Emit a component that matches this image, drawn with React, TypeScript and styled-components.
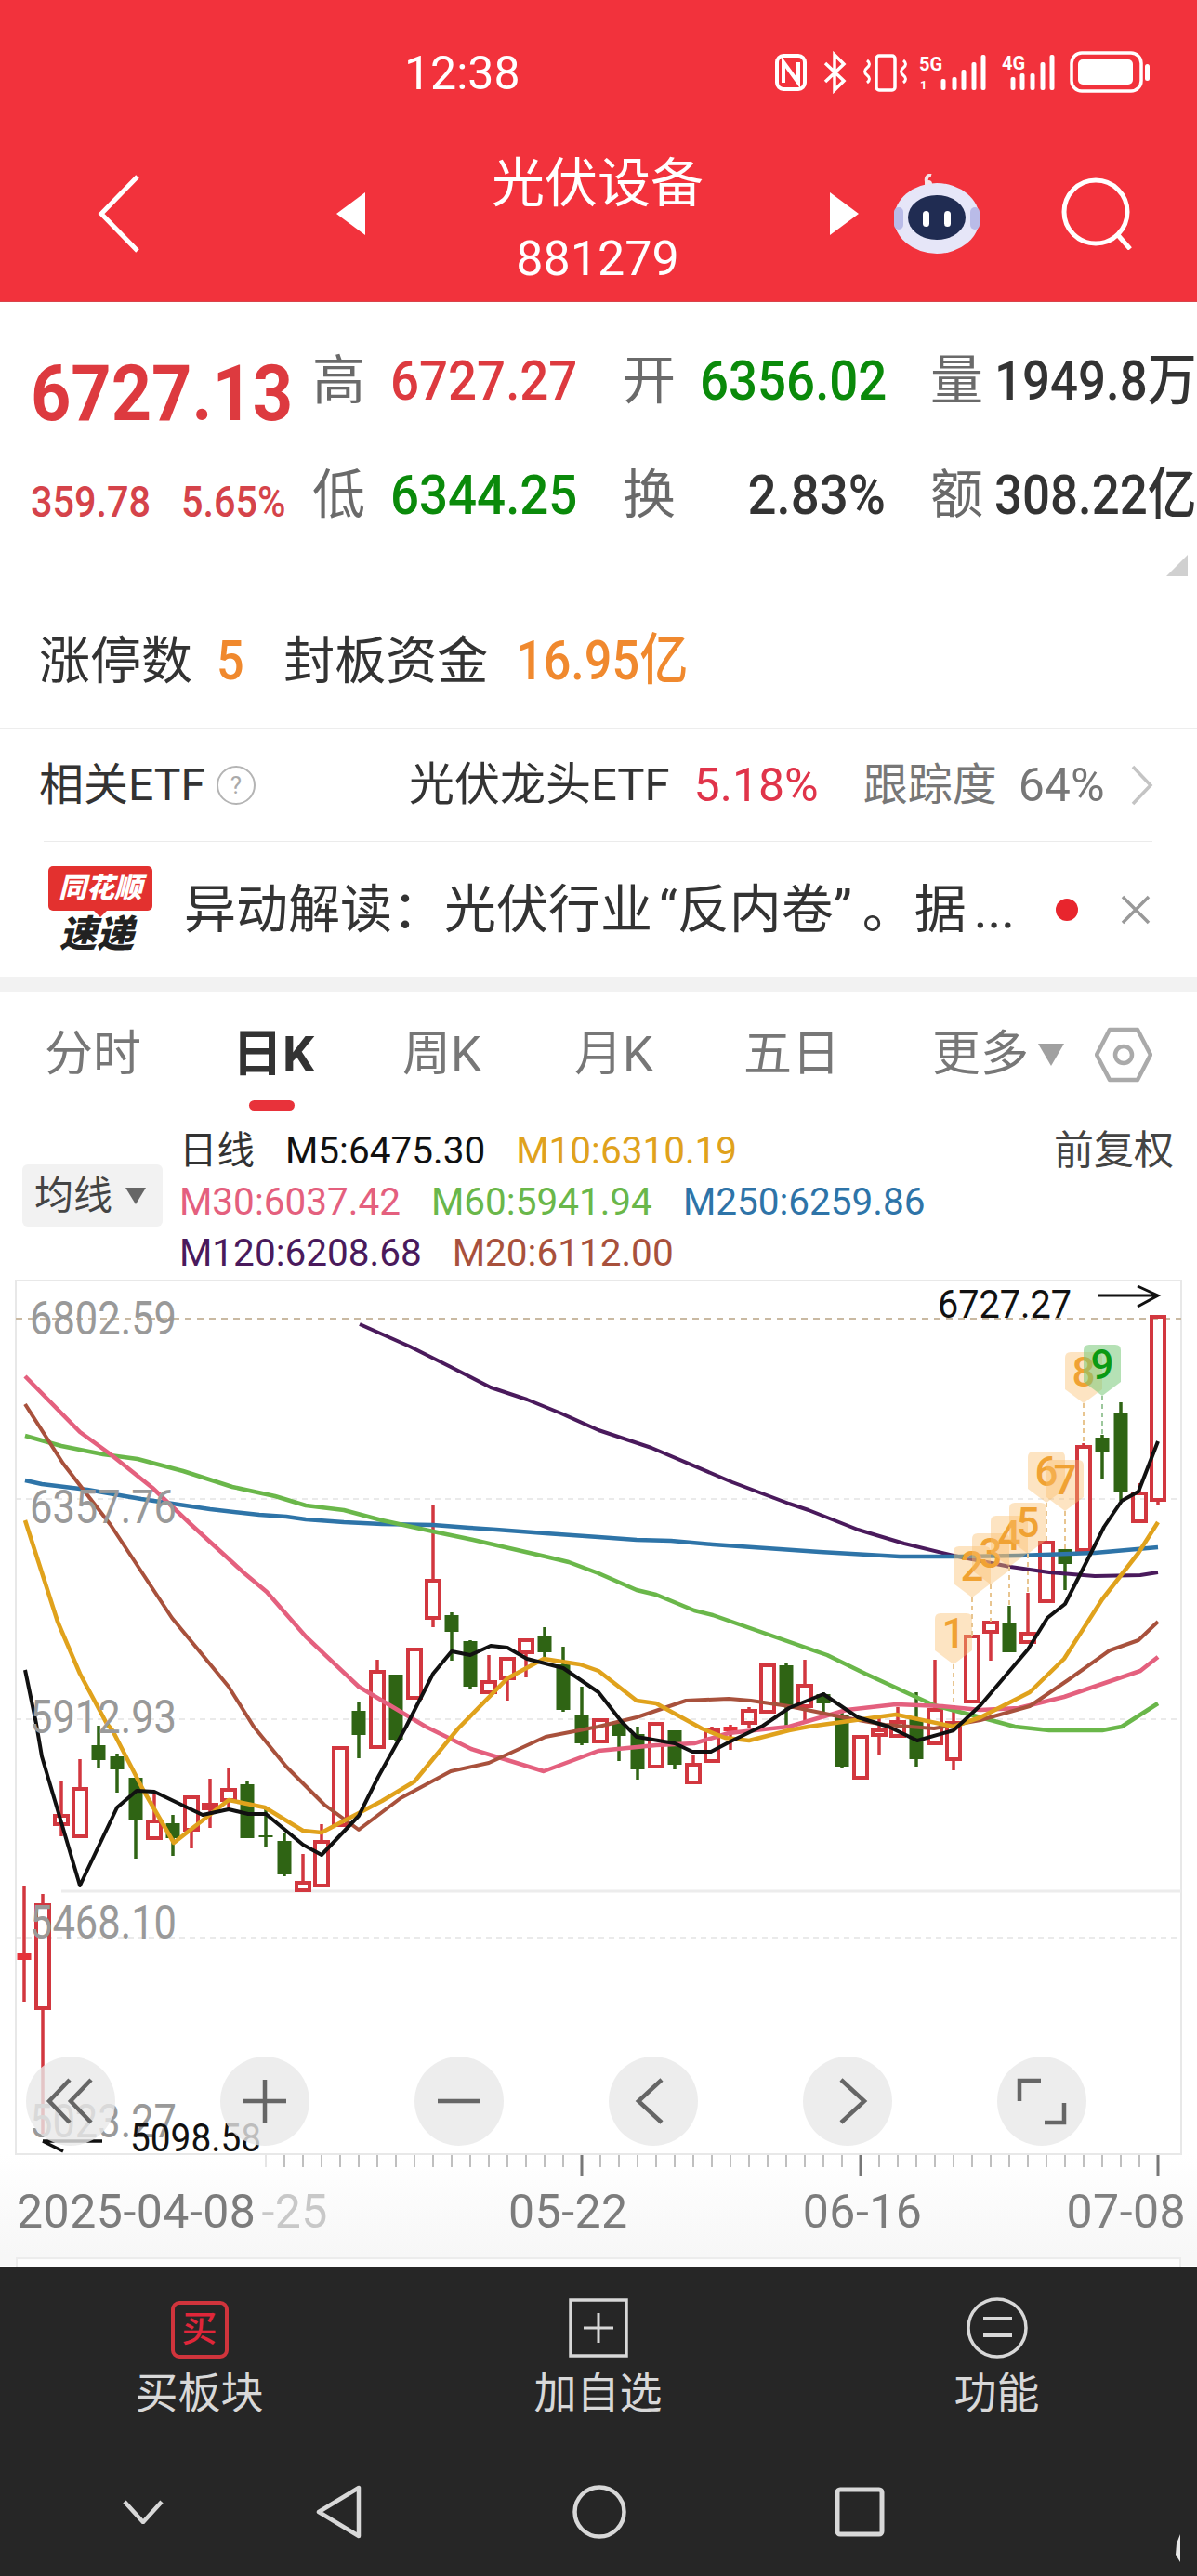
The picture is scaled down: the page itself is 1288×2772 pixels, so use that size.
import React from "react";
import styled, { createGlobalStyle } from "styled-components";

const FONT = `Roboto, "Noto Sans CJK SC", sans-serif`;

const GlobalStyle = createGlobalStyle`
  html, body {
    margin: 0;
    padding: 0;
    background: #fff;
  }
  body {
    font-family: ${FONT};
  }
`;

const Page = styled.div`
  position: relative;
  width: 1288px;
  height: 2772px;
  overflow: hidden;
  background: #fff;
`;

/* header */
const Header = styled.header`
  height: 325px;
  box-sizing: border-box;
  background: #f2323c;
  color: #fff;
  border-bottom: 1px solid #d9444b;
`;

const StatusBar = styled.div`
  display: flex;
  align-items: center;
  height: 50px;
  padding: 54px 0 0 435px;
`;

const Clock = styled.span`
  font-size: 50px;
  line-height: 50px;
  width: 399px;
`;

const NavRow = styled.div`
  display: flex;
  align-items: center;
  height: 170px;
  margin-top: 41px;
  padding-left: 105px;
`;

const TitleBlock = styled.div`
  width: 500px;
  display: flex;
  flex-direction: column;
  align-items: center;
  padding-top: 14px;
`;

const Title = styled.div`
  font-size: 57px;
  line-height: 66px;
`;

const Code = styled.div`
  font-size: 52px;
  line-height: 60px;
  margin-top: 18px;
`;

const NavIcon = styled.svg<{ $ml?: number }>`
  flex: none;
  display: block;
  margin-left: ${({ $ml }) => $ml ?? 0}px;
`;

/* quote */
const QuoteGrid = styled.div<{ $mt: number }>`
  display: grid;
  grid-template-columns: 303px 82px 252px 81px 250px 67px 218px;
  grid-template-rows: 56px;
  height: 56px;
  padding-left: 35px;
  margin-top: ${({ $mt }) => $mt}px;
  align-items: center;
`;

const BigPrice = styled.div`
  font-size: 84px;
  line-height: 56px;
  font-weight: 700;
  color: #dd3a3f;
  margin: 28px 0 0 -2px;
  transform: scaleX(0.9);
  transform-origin: left center;
`;

const SmallPrice = styled.div`
  display: flex;
  font-size: 46px;
  line-height: 56px;
  font-weight: 500;
  color: #d5434a;
  margin: 14px 0 0 -2px;
`;

const SmallFigure = styled.span`
  flex: none;
  width: 162px;
  transform: scaleX(0.9);
  transform-origin: left center;
`;

const QuoteLabel = styled.div`
  font-size: 57px;
  line-height: 56px;
  margin-left: -2px;
  color: #6a6a6a;
`;

const QuoteValue = styled.div<{ $color: string; $right?: boolean }>`
  font-size: 60px;
  line-height: 56px;
  font-weight: 500;
  color: ${({ $color }) => $color};
  width: 200px;
  text-align: ${({ $right }) => ($right ? "right" : "left")};
  white-space: nowrap;
  transform: scaleX(0.91);
  transform-origin: ${({ $right }) => ($right ? "right" : "left")} center;
`;

const QuoteSide = styled.div`
  font-size: 60px;
  line-height: 56px;
  font-weight: 500;
  color: #333;
  white-space: nowrap;
  transform: scaleX(0.88);
  transform-origin: left center;
`;

const CornerMark = styled.div`
  width: 0;
  height: 0;
  margin: 36px 0 0 1255px;
  border-left: 23px solid transparent;
  border-bottom: 23px solid #d0d0d0;
`;

const LimitRow = styled.div`
  display: flex;
  align-items: center;
  gap: 26px;
  height: 56px;
  margin-top: 63px;
  padding: 0 0 44px 42px;
  border-bottom: 1px solid #ededed;
`;

const LimitLabel = styled.span<{ $wide?: boolean }>`
  font-size: 55px;
  line-height: 56px;
  color: #333;
  margin-left: ${({ $wide }) => ($wide ? "12px" : "0")};
`;

const LimitValue = styled.span<{ $ml?: number }>`
  font-size: 60px;
  line-height: 56px;
  font-weight: 500;
  color: #f0892e;
  margin-left: ${({ $ml }) => $ml ?? 0}px;
  transform: scaleX(0.87);
  transform-origin: left center;
`;

/* etf + news */
const EtfRow = styled.div`
  display: flex;
  align-items: center;
  height: 121px;
  padding-left: 42px;
`;

const EtfText = styled.span<{ $ml?: number; $color?: string; $size?: number }>`
  font-size: ${({ $size }) => $size ?? 48}px;
  line-height: 60px;
  color: ${({ $color }) => $color ?? "#333"};
  margin-left: ${({ $ml }) => $ml ?? 0}px;
  white-space: nowrap;
`;

const HelpDot = styled.span`
  flex: none;
  display: flex;
  align-items: center;
  justify-content: center;
  width: 38px;
  height: 38px;
  margin-left: 12px;
  border: 2px solid #b4b4b4;
  border-radius: 50%;
  font-size: 26px;
  color: #aaa;
`;

const InsetRule = styled.div`
  height: 1px;
  margin: 0 48px 0 47px;
  background: #ebebeb;
`;

const NewsRow = styled.div`
  display: flex;
  align-items: center;
  height: 145px;
  padding-left: 51px;
`;

const Logo = styled.div`
  flex: none;
  width: 114px;
  display: flex;
  flex-direction: column;
  align-items: center;
`;

const LogoFlag = styled.div`
  position: relative;
  width: 112px;
  height: 48px;
  border-radius: 5px;
  background: #e3312f;
  color: #fff;
  font-size: 30px;
  line-height: 48px;
  font-weight: 900;
  font-style: italic;
  text-align: center;
  &::after {
    content: "";
    position: absolute;
    left: 48px;
    bottom: -7px;
    border-left: 8px solid transparent;
    border-right: 8px solid transparent;
    border-top: 8px solid #e3312f;
  }
`;

const LogoWord = styled.div`
  font-size: 40px;
  line-height: 40px;
  margin: 6px 8px 0 0;
  font-weight: 900;
  font-style: italic;
  color: #222;
`;

const NewsText = styled.div`
  width: 936px;
  flex: none;
  margin-left: 33px;
  font-size: 56px;
  line-height: 70px;
  color: #333;
  white-space: nowrap;
`;

const QuoteMark = styled.span<{ $before?: number; $after?: number }>`
  padding-left: ${({ $before }) => $before ?? 0}px;
  padding-right: ${({ $after }) => $after ?? 0}px;
`;

const NewsDot = styled.span`
  flex: none;
  width: 24px;
  height: 24px;
  margin-left: 2px;
  border-radius: 50%;
  background: #e8252d;
`;

const Band = styled.div`
  height: 16px;
  background: #f2f2f2;
`;

/* tabs */
const Tabs = styled.nav`
  display: grid;
  grid-template-columns: 204px 181px 185px 182px 203px 175px 62px;
  align-items: center;
  height: 129px;
  box-sizing: border-box;
  padding: 8px 0 0 48px;
  border-bottom: 1px solid #e8e8e8;
`;

const Tab = styled.div<{ $active?: boolean }>`
  position: relative;
  display: flex;
  align-items: center;
  font-size: ${({ $active }) => ($active ? 54 : 52)}px;
  line-height: 60px;
  color: ${({ $active }) => ($active ? "#333" : "#777")};
  font-weight: ${({ $active }) => ($active ? 700 : 400)};
  margin-left: ${({ $active }) => ($active ? "-2px" : "0")};
  &::after {
    content: "";
    display: ${({ $active }) => ($active ? "block" : "none")};
    position: absolute;
    left: 18px;
    top: 79px;
    width: 49px;
    height: 11px;
    border-radius: 6px;
    background: #e8323a;
  }
`;

const TabArrow = styled.span`
  margin-left: 10px;
  border-left: 14px solid transparent;
  border-right: 14px solid transparent;
  border-top: 24px solid #a0a0a0;
`;

/* legend */
const Legend = styled.div`
  display: flex;
  height: 182px;
  box-sizing: border-box;
  padding: 15px 25px 0 24px;
`;

const MaSelect = styled.div`
  flex: none;
  display: flex;
  align-items: center;
  box-sizing: border-box;
  width: 151px;
  height: 67px;
  margin: 42px 18px 0 0;
  padding-left: 13px;
  border-radius: 6px;
  background: #f2f2f2;
  font-size: 42px;
  line-height: 50px;
  color: #444;
`;

const SelectArrow = styled.span`
  margin-left: 14px;
  border-left: 11px solid transparent;
  border-right: 11px solid transparent;
  border-top: 18px solid #666;
`;

const LegendRows = styled.div`
  flex: 1;
  display: flex;
  flex-direction: column;
`;

const LegendRow = styled.div`
  display: flex;
  gap: 33px;
  height: 55px;
  align-items: center;
`;

const MaValue = styled.span<{ $color: string }>`
  font-size: 40.5px;
  line-height: 55px;
  color: ${({ $color }) => $color};
  white-space: nowrap;
`;

const AdjustMode = styled.span`
  margin-left: auto;
  font-size: 43px;
  line-height: 55px;
  color: #444;
`;

/* chart */
const ChartWrap = styled.section`
  position: relative;
  z-index: 1;
  height: 940px;
`;

const ChartSvg = styled.svg`
  display: block;
  overflow: visible;
`;

const AxisLabel = styled.text`
  font-family: ${FONT};
  font-size: 50px;
  fill: #999;
`;

const PriceTag = styled.text`
  font-family: ${FONT};
  font-size: 42px;
  fill: #111;
`;

const PinDigit = styled.text<{ $green?: boolean }>`
  font-family: ${FONT};
  font-size: 44px;
  font-weight: 500;
  text-anchor: middle;
  fill: ${({ $green }) => ($green ? "#0a9a14" : "#f0a233")};
`;

const Controls = styled.div`
  position: absolute;
  left: 28px;
  top: 835px;
  display: flex;
  gap: 113px;
`;

const RoundButton = styled.div`
  width: 96px;
  height: 96px;
  border-radius: 50%;
  display: flex;
  align-items: center;
  justify-content: center;
  background: rgba(232, 232, 232, 0.8);
`;

const ControlIcon = styled.svg`
  display: block;
  overflow: visible;
  fill: none;
  stroke: #666;
  stroke-width: 4.5;
  stroke-linejoin: miter;
`;

/* date axis */
const AxisStrip = styled.div`
  height: 120px;
  box-sizing: border-box;
  background: linear-gradient(to bottom, #ffffff 0%, #f7f7f7 90%);
`;

const TickSvg = styled.svg`
  display: block;
`;

const DateRow = styled.div`
  display: flex;
  height: 60px;
  margin-top: 6px;
  align-items: center;
`;

const DateLabel = styled.span<{ $ml: number; $color?: string }>`
  font-size: 50px;
  line-height: 60px;
  margin-left: ${({ $ml }) => $ml}px;
  color: ${({ $color }) => $color ?? "#7c7c7c"};
  letter-spacing: 0.5px;
  white-space: nowrap;
`;

const FrameTail = styled.div`
  position: absolute;
  left: 17px;
  top: 2429px;
  width: 1254px;
  height: 11px;
  border: 2px solid #ececec;
  border-bottom: 0;
  box-sizing: border-box;
  background: #fcfcfc;
`;

/* footer */
const Footer = styled.footer`
  position: absolute;
  z-index: 2;
  left: 0;
  top: 2440px;
  width: 1288px;
  height: 332px;
  background: #262626;
  color: #d8d8d8;
`;

const Toolbar = styled.div`
  display: grid;
  grid-template-columns: repeat(3, 429px);
  padding-top: 32px;
  height: 168px;
`;

const ToolItem = styled.div`
  display: flex;
  flex-direction: column;
  align-items: center;
`;

const ToolIconBox = styled.div`
  height: 66px;
  display: flex;
  align-items: center;
  justify-content: center;
`;

const BuyBadge = styled.div`
  width: 62px;
  height: 62px;
  box-sizing: border-box;
  margin-top: 3px;
  border: 4px solid #d0343c;
  border-radius: 9px;
  color: #e0263a;
  font-size: 38px;
  line-height: 52px;
  text-align: center;
  font-weight: 500;
`;

const ToolLabel = styled.div`
  margin-top: 7px;
  font-size: 46px;
  line-height: 60px;
`;

const SystemNav = styled.div`
  display: flex;
  align-items: center;
  height: 126px;
  padding-left: 132px;
`;

const CornerGlint = styled.svg`
  position: absolute;
  right: 18px;
  bottom: 15px;
`;

const StatusIcons = () => (
  <svg width="405" height="50" viewBox="834 55 405 50" fill="none" style={{ flex: "none" }}>
    <rect x="836" y="61" width="30" height="36" rx="7" stroke="#fff" strokeWidth="4" />
    <path d="M843 90 V68 L859 90 V68" stroke="#fff" strokeWidth="4" />
    <path d="M888 69 L908 88 L898 98 V60 L908 70 L888 89" stroke="#fff" strokeWidth="3.5" />
    <rect x="943" y="61" width="20" height="37" rx="3" stroke="#fff" strokeWidth="3.5" />
    <path d="M933 66 q5 4 0 8 q-5 4 0 8 q5 4 0 8" stroke="#fff" strokeWidth="3" />
    <path d="M972 66 q5 4 0 8 q-5 4 0 8 q5 4 0 8" stroke="#fff" strokeWidth="3" />
    <text x="989" y="77" fill="#fff" fontSize="20" fontWeight="700" fontFamily="Roboto, sans-serif">5G</text>
    <text x="990" y="97" fill="#fff" fontSize="13" fontWeight="700" fontFamily="Roboto, sans-serif">1</text>
    {[
      [1015, 86],
      [1027, 84],
      [1037, 76],
      [1048, 68],
      [1058, 60],
    ].map(([x, top]) => (
      <rect key={x} x={x - 2.5} y={top} width="5" height={98 - top} rx="2" fill="#fff" />
    ))}
    <text x="1078" y="76" fill="#fff" fontSize="20" fontWeight="700" fontFamily="Roboto, sans-serif">4G</text>
    {[
      [1090, 84],
      [1100, 80],
      [1111, 80],
      [1122, 68],
      [1132, 60],
    ].map(([x, top]) => (
      <rect key={x} x={x - 2.5} y={top} width="5" height={98 - top} rx="2" fill="#fff" />
    ))}
    <rect x="1153" y="58" width="75" height="41" rx="11" stroke="#fff" strokeWidth="3.5" />
    <rect x="1160" y="65" width="59" height="27" rx="5" fill="#fff" />
    <rect x="1232" y="70" width="5" height="18" rx="2.5" fill="#fff" />
  </svg>
);

const Robot = () => (
  <NavIcon width="92" height="86" viewBox="0 0 92 86" $ml={38}>
    <path d="M36 12 C33 5 36 1 40 2" fill="none" stroke="#f3e3e6" strokeWidth="4" />
    <circle cx="37" cy="11" r="4" fill="#f6e6ea" />
    <ellipse cx="46" cy="48" rx="46" ry="38" fill="#e6e6f8" />
    <rect x="0" y="36" width="10" height="24" rx="5" fill="#b9bbe8" />
    <rect x="82" y="36" width="10" height="24" rx="5" fill="#b9bbe8" />
    <ellipse cx="46" cy="47" rx="31" ry="24" fill="#202c52" />
    <rect x="31" y="40" width="7" height="17" rx="3.5" fill="#fff" />
    <rect x="54" y="40" width="7" height="17" rx="3.5" fill="#fff" />
  </NavIcon>
);

type Candle = [number, number, number, number, number, "r" | "g" | "f"];

// index, high, body top, body bottom, low, kind
const CANDLES: Candle[] = [
  [0, 2031, 2104, 2111, 2156, "f"],
  [1, 2040, 2052, 2163, 2300, "r"],
  [2, 1918, 1956, 1965, 1978, "r"],
  [3, 1895, 1927, 1978, 1980, "r"],
  [4, 1859, 1880, 1896, 1905, "g"],
  [5, 1889, 1892, 1906, 1931, "g"],
  [6, 1915, 1915, 1961, 2002, "g"],
  [7, 1933, 1962, 1980, 1980, "r"],
  [8, 1955, 1964, 1980, 1999, "g"],
  [9, 1936, 1936, 1971, 1991, "r"],
  [10, 1916, 1944, 1948, 1969, "r"],
  [11, 1904, 1928, 1939, 1948, "r"],
  [12, 1918, 1922, 1980, 1980, "g"],
  [13, 1946, 1977, 1979, 1989, "g"],
  [14, 1974, 1983, 2019, 2021, "g"],
  [15, 1997, 2028, 2036, 2036, "r"],
  [16, 1965, 1984, 2031, 2031, "r"],
  [17, 1883, 1883, 1966, 1966, "r"],
  [18, 1833, 1843, 1869, 1894, "g"],
  [19, 1788, 1801, 1882, 1884, "r"],
  [20, 1804, 1804, 1874, 1876, "g"],
  [21, 1777, 1777, 1829, 1829, "r"],
  [22, 1622, 1703, 1743, 1753, "r"],
  [23, 1737, 1740, 1758, 1789, "g"],
  [24, 1767, 1768, 1817, 1819, "g"],
  [25, 1783, 1812, 1823, 1823, "r"],
  [26, 1787, 1787, 1808, 1832, "r"],
  [27, 1767, 1767, 1780, 1807, "r"],
  [28, 1753, 1763, 1780, 1787, "g"],
  [29, 1774, 1793, 1842, 1844, "g"],
  [30, 1817, 1847, 1878, 1880, "g"],
  [31, 1853, 1853, 1876, 1876, "r"],
  [32, 1855, 1857, 1870, 1897, "g"],
  [33, 1860, 1868, 1906, 1917, "g"],
  [34, 1857, 1857, 1903, 1903, "r"],
  [35, 1864, 1864, 1901, 1906, "g"],
  [36, 1890, 1901, 1920, 1922, "r"],
  [37, 1860, 1864, 1897, 1897, "r"],
  [38, 1858, 1860, 1865, 1885, "f"],
  [39, 1839, 1843, 1856, 1862, "r"],
  [40, 1794, 1794, 1844, 1844, "r"],
  [41, 1791, 1794, 1838, 1860, "g"],
  [42, 1788, 1816, 1838, 1855, "r"],
  [43, 1823, 1825, 1835, 1847, "g"],
  [44, 1845, 1848, 1903, 1905, "g"],
  [45, 1870, 1871, 1915, 1915, "r"],
  [46, 1848, 1864, 1869, 1890, "r"],
  [47, 1839, 1855, 1870, 1870, "r"],
  [48, 1823, 1852, 1895, 1903, "g"],
  [49, 1788, 1842, 1878, 1878, "r"],
  [50, 1837, 1856, 1895, 1907, "r"],
  [51, 1763, 1763, 1833, 1833, "r"],
  [52, 1748, 1748, 1758, 1789, "r"],
  [53, 1730, 1749, 1780, 1780, "g"],
  [54, 1716, 1760, 1769, 1769, "r"],
  [55, 1662, 1662, 1725, 1725, "r"],
  [56, 1669, 1669, 1685, 1713, "g"],
  [57, 1555, 1559, 1670, 1673, "r"],
  [58, 1546, 1549, 1564, 1593, "g"],
  [59, 1511, 1523, 1608, 1617, "g"],
  [60, 1598, 1609, 1639, 1639, "r"],
  [61, 1419, 1419, 1616, 1622, "r"],
];

const RED = "#d2373f";
const GREEN = "#2f6414";
const candleX = (i: number) => 26 + 20 * i;

type MaLine = { color: string; width: number; points: string };

const MA_LINES: MaLine[] = [
  {
    color: "#4a1a5c",
    width: 4,
    points:
      "387,1427 441,1451 485,1473 528,1495 567,1508 604,1523 644,1541 701,1560 788,1597 849,1620 870,1627 923,1648 973,1663 1026,1676 1087,1688 1129,1694 1178,1698 1227,1697 1246,1694",
  },
  {
    color: "#2e74a8",
    width: 4.5,
    points:
      "27,1595 45,1599 94,1605 152,1615 226,1626 279,1632 308,1634 329,1637 370,1640 411,1642 466,1643 505,1646 534,1648 587,1652 644,1656 685,1659 722,1660 767,1664 882,1672 968,1677 1034,1677 1096,1676 1178,1673 1246,1667",
  },
  {
    color: "#6ab74a",
    width: 4.5,
    points:
      "27,1547 66,1558 111,1567 148,1572 197,1585 250,1602 296,1612 329,1622 370,1627 411,1638 466,1650 509,1659 587,1677 612,1683 644,1695 685,1713 706,1718 747,1735 767,1740 890,1783 931,1803 1005,1837 1055,1850 1092,1860 1129,1864 1186,1864 1207,1860 1246,1835",
  },
  {
    color: "#e4607e",
    width: 4.5,
    points:
      "27,1483 86,1543 119,1567 164,1603 205,1642 263,1695 287,1715 329,1763 386,1817 458,1860 507,1884 585,1908 644,1886 706,1880 747,1878 784,1867 849,1860 911,1842 964,1836 1014,1838 1055,1842 1096,1840 1145,1828 1227,1800 1246,1785",
  },
  {
    color: "#a8513c",
    width: 4,
    points:
      "27,1513 68,1577 119,1643 185,1743 246,1817 273,1860 308,1903 349,1944 386,1971 431,1937 485,1908 526,1899 587,1871 644,1860 685,1850 738,1832 784,1830 808,1832 849,1838 907,1850 952,1858 1005,1862 1055,1853 1108,1838 1149,1810 1194,1778 1225,1767 1246,1747",
  },
  {
    color: "#e0a21c",
    width: 4.5,
    points:
      "27,1638 62,1747 86,1803 115,1857 121,1864 154,1928 187,1985 246,1939 285,1947 326,1972 346,1974 411,1940 446,1919 493,1862 546,1808 585,1787 624,1793 644,1800 685,1832 706,1835 755,1862 780,1872 806,1875 849,1864 870,1860 964,1847 1026,1860 1055,1850 1108,1823 1145,1787 1186,1723 1225,1673 1246,1640",
  },
  {
    color: "#111",
    width: 4,
    points:
      "27,1799 39,1857 45,1892 86,2031 126,1947 147,1929 166,1930 218,1955 246,1949 267,1954 286,1954 326,1987 346,1998 386,1956 407,1914 427,1878 437,1860 466,1803 486,1779 506,1783 528,1773 546,1775 567,1787 606,1797 644,1823 669,1855 685,1871 726,1878 745,1887 765,1887 786,1876 821,1859 849,1840 886,1825 923,1850 956,1860 987,1875 1026,1864 1038,1853 1055,1837 1106,1777 1127,1743 1146,1728 1174,1673 1188,1645 1207,1617 1225,1607 1246,1553",
  },
];

type Pin = { n: string; cx: number; top: number; end: number; green?: boolean };

const PINS: Pin[] = [
  { n: "1", cx: 1026, top: 1738, end: 1837 },
  { n: "2", cx: 1046, top: 1666, end: 1762 },
  { n: "3", cx: 1066, top: 1652, end: 1747 },
  { n: "4", cx: 1086, top: 1633, end: 1730 },
  { n: "5", cx: 1106, top: 1619, end: 1716 },
  { n: "6", cx: 1126, top: 1564, end: 1662 },
  { n: "7", cx: 1146, top: 1573, end: 1669 },
  { n: "8", cx: 1166, top: 1457, end: 1555 },
  { n: "9", cx: 1186, top: 1449, end: 1546, green: true },
];

const pinPath = (cx: number, top: number) =>
  `M${cx - 14} ${top} H${cx + 14} Q${cx + 20} ${top} ${cx + 20} ${top + 6} V${top + 40} L${cx} ${top + 55} L${cx - 20} ${top + 40} V${top + 6} Q${cx - 20} ${top} ${cx - 14} ${top} Z`;

const AXIS_LABELS: [string, number][] = [
  ["6802.59", 1438],
  ["6357.76", 1641],
  ["5912.93", 1867],
  ["5468.10", 2088],
  ["5023.27", 2302],
];

const Chart = () => (
  <ChartSvg width="1288" height="940" viewBox="0 1380 1288 940">
    <rect x="17" y="1380" width="1254" height="940" fill="#fff" stroke="#e8e8e8" strokeWidth="2" />
    <line x1="17" x2="1271" y1="1421" y2="1421" stroke="#c9b9a2" strokeWidth="2" strokeDasharray="7 6" />
    {[1615, 1852, 2087].map((y) => (
      <line key={y} x1="17" x2="1271" y1={y} y2={y} stroke="#e4e4e4" strokeWidth="1.5" strokeDasharray="6 5" />
    ))}
    <line x1="66" x2="1271" y1="2037" y2="2037" stroke="#ececec" strokeWidth="3" />

    {CANDLES.map(([i, high, top, bottom, low, kind]) => {
      const x = candleX(i);
      const color = kind === "g" ? GREEN : RED;
      return (
        <g key={i}>
          <line x1={x} x2={x} y1={high} y2={top} stroke={color} strokeWidth="3.5" />
          <line x1={x} x2={x} y1={bottom} y2={low} stroke={color} strokeWidth="3.5" />
          {kind === "r" ? (
            <rect x={x - 7} y={top} width="14" height={bottom - top} fill="none" stroke={color} strokeWidth="4" />
          ) : (
            <rect x={x - 7.5} y={top} width="15" height={bottom - top} fill={kind === "f" ? "#e5323a" : color} />
          )}
        </g>
      );
    })}

    {MA_LINES.map((line) => (
      <polyline
        key={line.color}
        points={line.points}
        fill="none"
        stroke={line.color}
        strokeWidth={line.width}
        strokeLinejoin="round"
      />
    ))}

    {PINS.map((pin) => (
      <g key={pin.n}>
        <line
          x1={pin.cx}
          x2={pin.cx}
          y1={pin.top + 55}
          y2={pin.end}
          stroke={pin.green ? "#9cc79c" : "#e8c590"}
          strokeWidth="2"
          strokeDasharray="5 4"
        />
        <path d={pinPath(pin.cx, pin.top)} fill={pin.green ? "rgba(120,200,120,0.55)" : "rgba(250,190,110,0.42)"} />
        <PinDigit x={pin.cx} y={pin.top + 37} $green={pin.green}>
          {pin.n}
        </PinDigit>
      </g>
    ))}

    {AXIS_LABELS.map(([text, y]) => (
      <AxisLabel key={text} x="32" y={y} textLength="158" lengthAdjust="spacingAndGlyphs">
        {text}
      </AxisLabel>
    ))}

    <PriceTag x="1009" y="1420" textLength="144" lengthAdjust="spacingAndGlyphs">6727.27</PriceTag>
    <path d="M1181 1396 H1246 M1224 1386 L1246 1396 L1224 1408" fill="none" stroke="#111" strokeWidth="3" />
    <PriceTag x="140" y="2317" textLength="141" lengthAdjust="spacingAndGlyphs">5098.58</PriceTag>
    <path d="M110 2306 H46 M68 2317 L46 2306" fill="none" stroke="#111" strokeWidth="3.5" />
  </ChartSvg>
);

const CONTROL_PATHS = [
  "M23 1 L1 24 L23 47 M46 1 L24 24 L46 47",
  "M24 1 V47 M1 24 H47",
  "M1 24 H47",
  "M33 1 L8 24 L33 47",
  "M17 1 L42 24 L17 47",
  "M0 24 V2 H23 M27 47 H48 V26",
];

const Ticks = () => (
  <TickSvg width="1288" height="26" viewBox="0 0 1288 26">
    {Array.from({ length: 49 }, (_, k) => {
      const i = 13 + k;
      const major = i === 30 || i === 45 || i === 61;
      const x = candleX(i);
      return (
        <line
          key={i}
          x1={x}
          x2={x}
          y1={0}
          y2={major ? 24 : 14}
          stroke={i === 13 ? "#ddd" : major ? "#777" : "#aaa"}
          strokeWidth={major ? 3 : 1.5}
        />
      );
    })}
  </TickSvg>
);

export default function App() {
  return (
    <Page>
      <GlobalStyle />
      <Header>
        <StatusBar>
          <Clock>12:38</Clock>
          <StatusIcons />
        </StatusBar>
        <NavRow>
          <NavIcon width="46" height="84" viewBox="0 0 46 84" fill="none">
            <path d="M43 2 L4 42 L43 82" stroke="#fff" strokeWidth="5" />
          </NavIcon>
          <NavIcon width="31" height="46" viewBox="0 0 31 46" $ml={211}>
            <path d="M31 0 V46 L0 23 Z" fill="#fff" />
          </NavIcon>
          <TitleBlock>
            <Title>光伏设备</Title>
            <Code>881279</Code>
          </TitleBlock>
          <NavIcon width="31" height="46" viewBox="0 0 31 46">
            <path d="M0 0 V46 L31 23 Z" fill="#fff" />
          </NavIcon>
          <Robot />
          <NavIcon width="78" height="78" viewBox="0 0 78 78" fill="none" $ml={88}>
            <circle cx="37" cy="37" r="34" stroke="#fff" strokeWidth="5" />
            <path d="M61 62 L74 77" stroke="#fff" strokeWidth="5" />
          </NavIcon>
        </NavRow>
      </Header>

      <QuoteGrid $mt={57}>
        <BigPrice>6727.13</BigPrice>
        <QuoteLabel>高</QuoteLabel>
        <QuoteValue $color="#dd3a3f">6727.27</QuoteValue>
        <QuoteLabel>开</QuoteLabel>
        <QuoteValue $color="#0a8a0a">6356.02</QuoteValue>
        <QuoteLabel>量</QuoteLabel>
        <QuoteSide>1949.8万</QuoteSide>
      </QuoteGrid>
      <QuoteGrid $mt={67}>
        <SmallPrice>
          <SmallFigure>359.78</SmallFigure>
          <SmallFigure>5.65%</SmallFigure>
        </SmallPrice>
        <QuoteLabel>低</QuoteLabel>
        <QuoteValue $color="#0a8a0a">6344.25</QuoteValue>
        <QuoteLabel>换</QuoteLabel>
        <QuoteValue $color="#333" $right>
          2.83%
        </QuoteValue>
        <QuoteLabel>额</QuoteLabel>
        <QuoteSide>308.22亿</QuoteSide>
      </QuoteGrid>
      <CornerMark />
      <LimitRow>
        <LimitLabel>涨停数</LimitLabel>
        <LimitValue>5</LimitValue>
        <LimitLabel $wide>封板资金</LimitLabel>
        <LimitValue $ml={4}>16.95亿</LimitValue>
      </LimitRow>

      <EtfRow>
        <EtfText>相关ETF</EtfText>
        <HelpDot>?</HelpDot>
        <EtfText $ml={165} $size={49}>光伏龙头ETF</EtfText>
        <EtfText $ml={26} $color="#e0344a" $size={50}>5.18%</EtfText>
        <EtfText $ml={48} $color="#777">跟踪度</EtfText>
        <EtfText $ml={23} $color="#777" $size={50}>64%</EtfText>
        <NavIcon width="26" height="44" viewBox="0 0 26 44" fill="none" $ml={27}>
          <path d="M3 2 L22 22 L3 42" stroke="#c4c4c4" strokeWidth="3.5" />
        </NavIcon>
      </EtfRow>
      <InsetRule />
      <NewsRow>
        <Logo>
          <LogoFlag>同花顺</LogoFlag>
          <LogoWord>速递</LogoWord>
        </Logo>
        <NewsText>
          异动解读：光伏行业
          <QuoteMark $before={7}>“</QuoteMark>
          反内卷
          <QuoteMark $after={11}>”</QuoteMark>
          。据
          <QuoteMark $before={8}>...</QuoteMark>
        </NewsText>
        <NewsDot />
        <NavIcon width="32" height="32" viewBox="0 0 32 32" fill="none" $ml={46}>
          <path d="M2 2 L30 30 M30 2 L2 30" stroke="#999" strokeWidth="3.5" />
        </NavIcon>
      </NewsRow>
      <Band />

      <Tabs>
        <Tab>分时</Tab>
        <Tab $active>日K</Tab>
        <Tab>周K</Tab>
        <Tab>月K</Tab>
        <Tab>五日</Tab>
        <Tab>
          更多
          <TabArrow />
        </Tab>
        <NavIcon width="62" height="60" viewBox="0 0 62 60" fill="none">
          <path d="M16 3 H46 L60 30 L46 57 H16 L2 30 Z" stroke="#aaa" strokeWidth="4.5" strokeLinejoin="round" />
          <circle cx="31" cy="30" r="9" stroke="#aaa" strokeWidth="4.5" />
        </NavIcon>
      </Tabs>

      <Legend>
        <MaSelect>
          均线
          <SelectArrow />
        </MaSelect>
        <LegendRows>
          <LegendRow>
            <MaValue $color="#333">日线</MaValue>
            <MaValue $color="#111">M5:6475.30</MaValue>
            <MaValue $color="#e0a21c">M10:6310.19</MaValue>
            <AdjustMode>前复权</AdjustMode>
          </LegendRow>
          <LegendRow>
            <MaValue $color="#e4607e">M30:6037.42</MaValue>
            <MaValue $color="#6ab74a">M60:5941.94</MaValue>
            <MaValue $color="#2e74a8">M250:6259.86</MaValue>
          </LegendRow>
          <LegendRow>
            <MaValue $color="#4a1a5c">M120:6208.68</MaValue>
            <MaValue $color="#a8513c">M20:6112.00</MaValue>
          </LegendRow>
        </LegendRows>
      </Legend>

      <ChartWrap>
        <Chart />
        <Controls>
          {CONTROL_PATHS.map((d) => (
            <RoundButton key={d}>
              <ControlIcon width="48" height="48" viewBox="0 0 48 48">
                <path d={d} />
              </ControlIcon>
            </RoundButton>
          ))}
        </Controls>
      </ChartWrap>

      <AxisStrip>
        <Ticks />
        <DateRow>
          <DateLabel $ml={18}>2025-04-08</DateLabel>
          <DateLabel $ml={6} $color="#c8c8c8">-25</DateLabel>
          <DateLabel $ml={194}>05-22</DateLabel>
          <DateLabel $ml={188}>06-16</DateLabel>
          <DateLabel $ml={155} $color="#808080">07-08</DateLabel>
        </DateRow>
      </AxisStrip>
      <FrameTail />

      <Footer>
        <Toolbar>
          <ToolItem>
            <ToolIconBox>
              <BuyBadge>买</BuyBadge>
            </ToolIconBox>
            <ToolLabel>买板块</ToolLabel>
          </ToolItem>
          <ToolItem>
            <ToolIconBox>
              <NavIcon width="64" height="64" viewBox="0 0 64 64" fill="none">
                <rect x="2" y="2" width="60" height="60" stroke="#d8d8d8" strokeWidth="3.5" />
                <path d="M32 16 V48 M16 32 H48" stroke="#d8d8d8" strokeWidth="3" />
              </NavIcon>
            </ToolIconBox>
            <ToolLabel>加自选</ToolLabel>
          </ToolItem>
          <ToolItem>
            <ToolIconBox>
              <NavIcon width="66" height="66" viewBox="0 0 66 66" fill="none">
                <circle cx="33" cy="33" r="31" stroke="#d8d8d8" strokeWidth="3.5" />
                <path d="M18 23 H49 M18 41 H49" stroke="#d8d8d8" strokeWidth="4" />
              </NavIcon>
            </ToolIconBox>
            <ToolLabel>功能</ToolLabel>
          </ToolItem>
        </Toolbar>
        <SystemNav>
          <NavIcon width="44" height="26" viewBox="0 0 44 26" fill="none">
            <path d="M2 2 L22 24 L42 2" stroke="#d8d8d8" strokeWidth="4.5" />
          </NavIcon>
          <NavIcon width="50" height="58" viewBox="0 0 50 58" fill="none" $ml={164}>
            <path d="M46 3 V55 L3 29 Z" stroke="#d8d8d8" strokeWidth="4.5" strokeLinejoin="round" />
          </NavIcon>
          <NavIcon width="58" height="58" viewBox="0 0 58 58" fill="none" $ml={226}>
            <circle cx="29" cy="29" r="26.5" stroke="#d8d8d8" strokeWidth="4.5" />
          </NavIcon>
          <NavIcon width="54" height="54" viewBox="0 0 54 54" fill="none" $ml={224}>
            <rect x="3" y="3" width="48" height="48" rx="3" stroke="#d8d8d8" strokeWidth="5" />
          </NavIcon>
        </SystemNav>
        <CornerGlint width="6" height="30" viewBox="0 0 6 30">
          <path d="M6 0 V30 L1 22 L2 10 Z" fill="#e8e8e8" />
        </CornerGlint>
      </Footer>
    </Page>
  );
}
